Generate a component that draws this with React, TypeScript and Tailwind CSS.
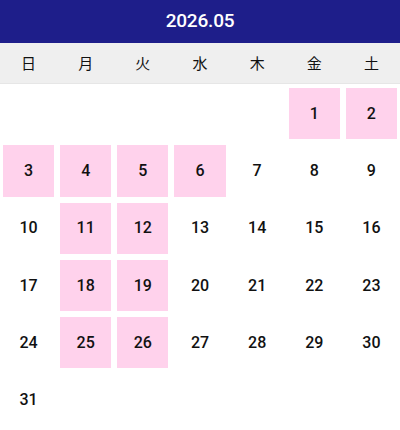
import React from "react";

const pink = new Set([1, 2, 3, 4, 5, 6, 11, 12, 18, 19, 25, 26]);
const days = ["日", "月", "火", "水", "木", "金", "土"];

export default function App() {
  const cells: (number | null)[] = [];
  for (let i = 0; i < 5; i++) cells.push(null);
  for (let d = 1; d <= 31; d++) cells.push(d);
  while (cells.length % 7 !== 0) cells.push(null);

  return (
    <div className="w-[400px] h-[430px] bg-white overflow-hidden" style={{ fontFamily: "Roboto, 'Noto Sans CJK JP', sans-serif" }}>
      <div className="h-[43px] bg-[#1e1e8a] flex items-center justify-center text-white text-[19px] font-medium tracking-[-0.2px]">
        2026.05
      </div>
      <div className="h-[41px] bg-[#efefef] grid grid-cols-7 items-center border-b border-[#e6e6e6]">
        {days.map((d) => (
          <div key={d} className="text-center text-[15px] text-[#111]" style={{ fontFamily: "'Noto Sans CJK JP', sans-serif" }}>
            {d}
          </div>
        ))}
      </div>
      <div className="grid grid-cols-7 pt-[1px]">
        {cells.map((d, i) => (
          <div key={i} className="h-[57.3px] p-[3px]">
            {d !== null && (
              <div
                className={
                  "h-full w-full flex items-center justify-center text-[16px] font-medium text-[#111] " +
                  (pink.has(d) ? "bg-[#ffd2ec]" : "")
                }
              >
                {d}
              </div>
            )}
          </div>
        ))}
      </div>
    </div>
  );
}
